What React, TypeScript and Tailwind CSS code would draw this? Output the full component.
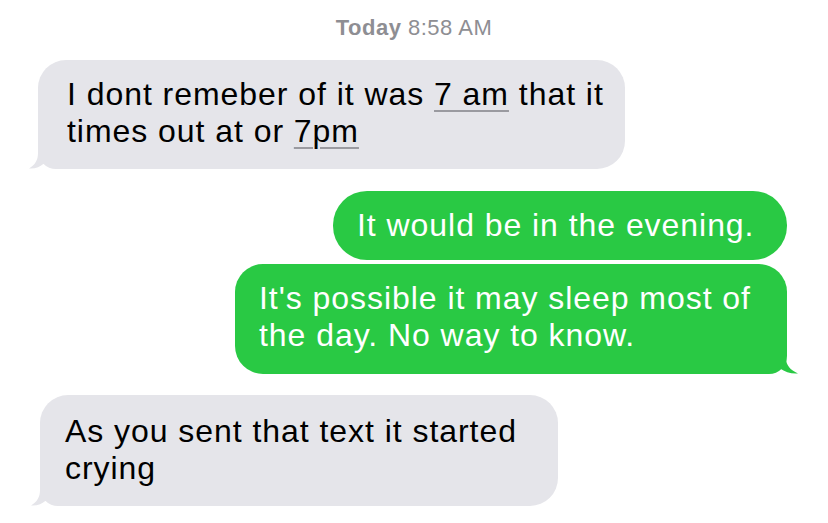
import type { ReactNode } from 'react';

const GRAY = 'bg-[#e5e5ea] text-black';
const GREEN = 'bg-[#29c944] text-white';

function TailLeft() {
  return (
    <svg className="absolute -left-[9px] bottom-0" width="18" height="25" viewBox="0 0 18 25" fill="#e5e5ea">
      <path d="M9 0 V9 C9 16 6 21 0 24.5 C6 25 11 23 15 19.5 V0 Z" />
    </svg>
  );
}

function TailRight() {
  return (
    <svg className="absolute -right-[11px] bottom-0" width="23" height="25" viewBox="0 0 23 25" fill="#29c944">
      <path d="M11 0 V9 C11 16 15 21 23 24.5 C16 25 10 23 5 19.5 V0 Z" />
    </svg>
  );
}

function Link({ children }: { children: ReactNode }) {
  return (
    <span className="underline decoration-[#9a9aa0] decoration-[1.5px] underline-offset-[5px]">{children}</span>
  );
}

export default function App() {
  return (
    <div className="w-[828px] h-[523px] bg-white overflow-hidden flex flex-col font-['Liberation_Sans',Arial,sans-serif]">
      {/* timestamp */}
      <p className="pt-[15px] text-center text-[22px] leading-[26px] tracking-[0.5px] text-[#8e8e93]">
        <span className="font-semibold">Today</span> 8:58 AM
      </p>

      {/* received */}
      <div className={`relative mt-[19px] ml-[38px] w-[587px] pl-[29px] pt-4 pb-[19px] rounded-[28px] rounded-bl-[18px] ${GRAY}`}>
        <p className="text-[32px] leading-[37px] tracking-[0.95px] whitespace-nowrap">
          I dont remeber of it was <Link>7 am</Link> that it
          <br />
          times out at or <Link>7pm</Link>
        </p>
        <TailLeft />
      </div>

      {/* sent */}
      <div className={`relative mt-[22px] self-end mr-[41px] w-[454px] pl-6 pt-4 pb-[17px] rounded-[34px] ${GREEN}`}>
        <p className="text-[32px] leading-[36px] tracking-[0.95px] whitespace-nowrap">It would be in the evening.</p>
      </div>

      <div className={`relative mt-1 self-end mr-[41px] w-[552px] pl-6 pt-4 pb-[20px] rounded-[28px] rounded-br-[18px] ${GREEN}`}>
        <p className="text-[32px] leading-[37px] tracking-[0.95px] whitespace-nowrap">
          It's possible it may sleep most of
          <br />
          the day. No way to know.
        </p>
        <TailRight />
      </div>

      {/* received */}
      <div className={`relative mt-[21px] ml-[40px] w-[518px] pl-[25px] pt-[18px] pb-[19px] rounded-[28px] rounded-bl-[18px] ${GRAY}`}>
        <p className="text-[32px] leading-[37px] tracking-[0.95px] whitespace-nowrap">
          As you sent that text it started
          <br />
          crying
        </p>
        <TailLeft />
      </div>
    </div>
  );
}
